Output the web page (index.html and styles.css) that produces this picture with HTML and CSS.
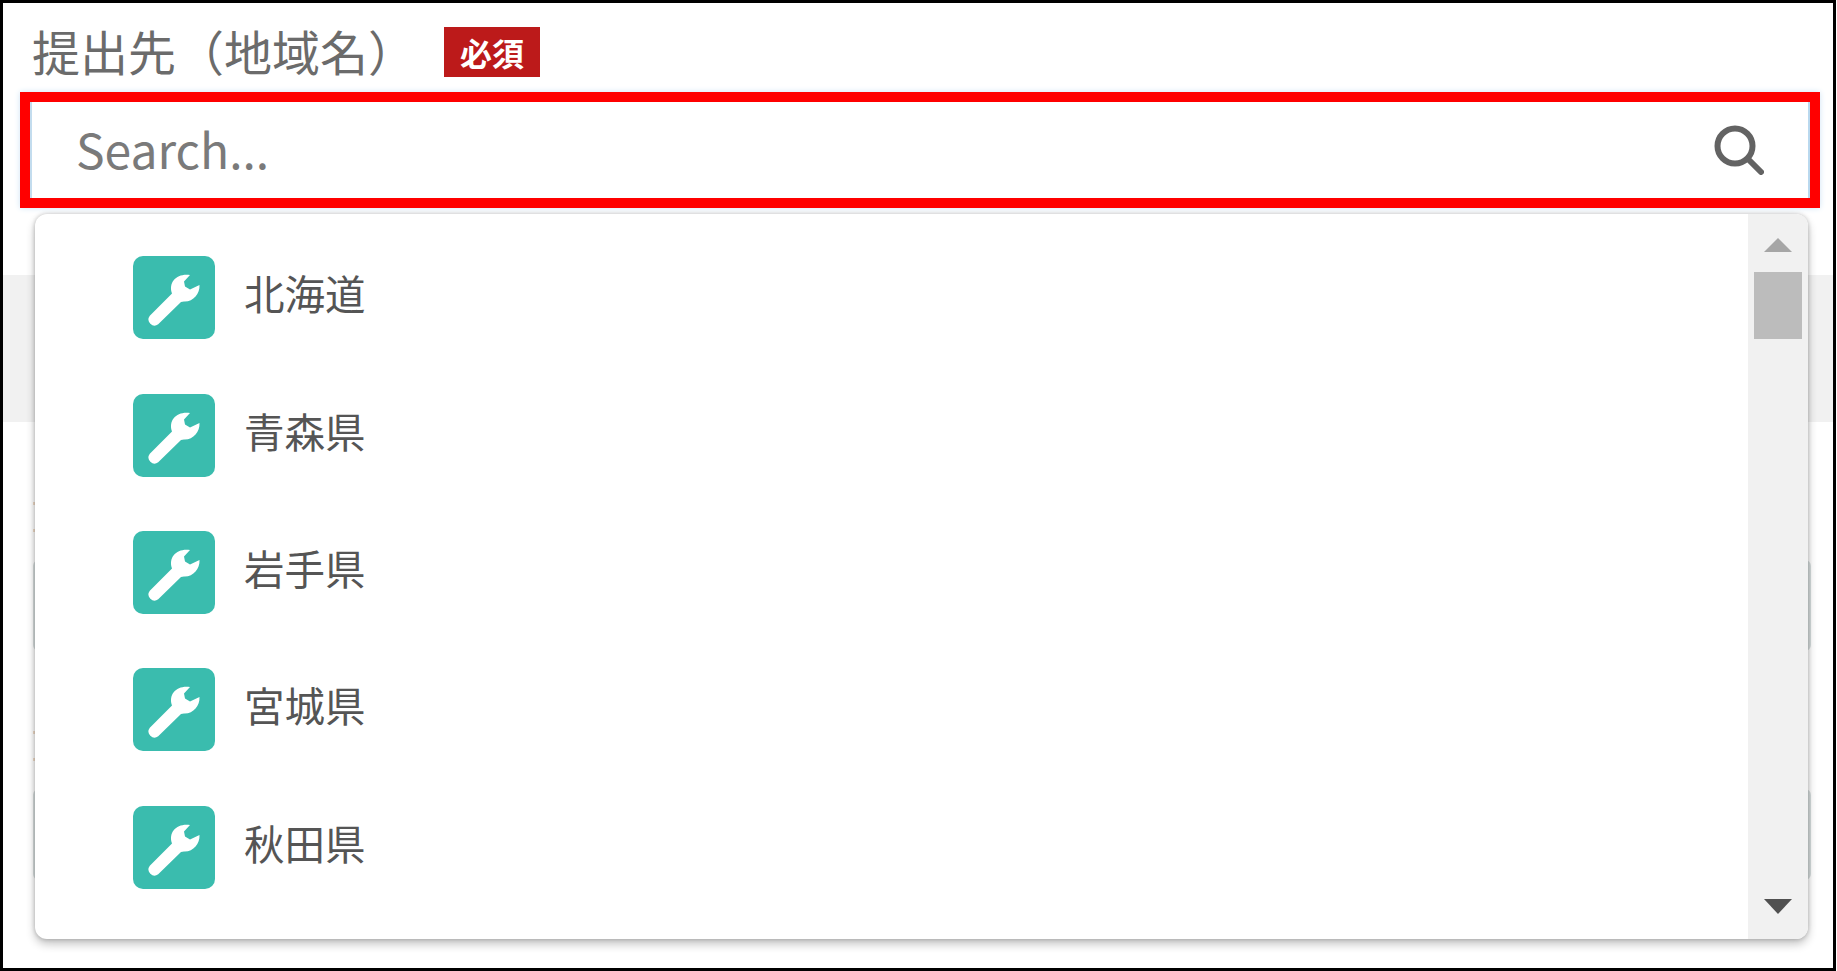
FILE: index.html
```html
<!DOCTYPE html>
<html lang="ja">
<head>
    <meta charset="UTF-8">
    <meta name="viewport" content="width=device-width, initial-scale=1.0">
    <title>提出先（地域名）</title>
    <link rel="stylesheet" href="styles.css">
</head>
<body>
    <div class="frame">
        <div class="label-row">
            <span class="label">提出先（地域名）</span>
            <span class="badge">必須</span>
        </div>
        <div class="highlight">
            <div class="search">
                <span class="search-text">Search...</span>
                <svg class="search-icon" viewBox="0 0 50 50">
                    <circle cx="21" cy="21" r="17.5" fill="none" stroke="#636363" stroke-width="6"/>
                    <path d="M34 34 L47 47" fill="none" stroke="#636363" stroke-width="6" stroke-linecap="round"/>
                </svg>
            </div>
        </div>

        <!-- page content behind the open dropdown -->
        <div class="band"></div>
        <div class="field-group">
            <span class="mark"></span>
            <span class="mark"></span>
            <div class="field"></div>
        </div>
        <div class="field-group">
            <span class="mark"></span>
            <span class="mark"></span>
            <div class="field"></div>
        </div>

        <div class="dropdown">
            <ul class="options">
                <li class="option">
                    <svg class="option-icon" viewBox="0 0 82 83"><use href="#wrench"/></svg>
                    <span>北海道</span>
                </li>
                <li class="option">
                    <svg class="option-icon" viewBox="0 0 82 83"><use href="#wrench"/></svg>
                    <span>青森県</span>
                </li>
                <li class="option">
                    <svg class="option-icon" viewBox="0 0 82 83"><use href="#wrench"/></svg>
                    <span>岩手県</span>
                </li>
                <li class="option">
                    <svg class="option-icon" viewBox="0 0 82 83"><use href="#wrench"/></svg>
                    <span>宮城県</span>
                </li>
                <li class="option">
                    <svg class="option-icon" viewBox="0 0 82 83"><use href="#wrench"/></svg>
                    <span>秋田県</span>
                </li>
            </ul>
            <div class="scrollbar">
                <span class="arrow-up"></span>
                <span class="thumb"></span>
                <span class="arrow-down"></span>
            </div>
        </div>
    </div>

    <svg class="defs" width="0" height="0">
        <symbol id="wrench" viewBox="0 0 82 83">
            <rect width="82" height="83" rx="10" fill="#3abcae"/>
            <path d="M57 19 L51 25.5 L52 30.5 L57 33.5 L66.5 29 C67 38 60 46 51 45.5 L48 46 L25.2 68.2 A6 6 0 0 1 16.8 59.8 L39 37.5 C35 26 44 17 57 19 Z" fill="#fff"/>
        </symbol>
    </svg>
</body>
</html>
```

FILE: styles.css
```css
body {
    margin: 0;
    background: #fff;
    font-family: "Noto Sans CJK JP", "Noto Sans", sans-serif;
}
.frame {
    position: relative;
    box-sizing: border-box;
    width: 1836px;
    height: 971px;
    border: 3px solid #000;
    overflow: hidden;
}
.label-row {
    display: flex;
    align-items: center;
    height: 50px;
    margin-top: 24px;
    padding-left: 29px;
}
.label {
    width: 412px;
    padding-bottom: 4px;
    font-size: 48px;
    line-height: 50px;
    color: #6b6b6b;
    white-space: nowrap;
}
.badge {
    display: flex;
    align-items: center;
    justify-content: center;
    width: 96px;
    height: 50px;
    background: #bc1a1a;
    color: #fff;
    font-size: 32px;
    font-weight: 700;
}
.highlight {
    box-sizing: border-box;
    width: 1800px;
    height: 116px;
    margin: 15px 0 0 17px;
    border: 10px solid #f00;
    box-shadow: 0 0 6px #cfe4f5;
}
.search {
    display: flex;
    align-items: center;
    justify-content: space-between;
    box-sizing: border-box;
    height: 96px;
    padding: 0 44px 0 44px;
    background: #fff;
    border-left: 2px solid #c3dcee;
    border-right: 2px solid #b9d8ee;
}
.search-text {
    padding-bottom: 5px;
    font-size: 48px;
    color: #7a7a7a;
}
.search-icon {
    width: 50px;
    height: 50px;
}
.band {
    height: 147px;
    margin-top: 67px;
    background: #f1f1f1;
}
.field-group {
    display: flex;
    flex-direction: column;
    align-items: flex-start;
    height: 229px;
    padding-left: 30px;
}
.mark {
    width: 3px;
    height: 3px;
    margin-top: 24px;
    background: #f0dcc8;
}
.mark:first-child {
    margin-top: 80px;
}
.field {
    box-sizing: border-box;
    width: 1778px;
    height: 98px;
    margin-top: 28px;
    border: 3px solid #d8dfdf;
    border-radius: 6px;
}
.dropdown {
    position: absolute;
    left: 32px;
    top: 211px;
    width: 1773px;
    height: 725px;
    display: flex;
    background: #fff;
    border-radius: 12px;
    box-shadow: 0 0 4px rgba(0, 0, 0, 0.22), 0 5px 10px rgba(0, 0, 0, 0.24);
    overflow: hidden;
}
.options {
    flex: 1;
    margin: 0;
    padding: 15px 0 0 98px;
    list-style: none;
}
.option {
    display: flex;
    align-items: center;
    gap: 29px;
    height: 137.4px;
    font-size: 40.5px;
    color: #555;
}
.option span {
    padding-bottom: 10px;
}
.option-icon {
    width: 82px;
    height: 83px;
}
.scrollbar {
    display: flex;
    flex-direction: column;
    align-items: center;
    width: 60px;
    background: #f1f1f1;
}
.arrow-up {
    width: 0;
    height: 0;
    margin-top: 24px;
    border-left: 14px solid transparent;
    border-right: 14px solid transparent;
    border-bottom: 14px solid #a6a6a6;
}
.thumb {
    width: 48px;
    height: 67px;
    margin-top: 20px;
    background: #bcbcbc;
}
.arrow-down {
    width: 0;
    height: 0;
    margin-top: auto;
    margin-bottom: 25px;
    border-left: 14px solid transparent;
    border-right: 14px solid transparent;
    border-top: 15px solid #505050;
}
.defs {
    position: absolute;
}
```
